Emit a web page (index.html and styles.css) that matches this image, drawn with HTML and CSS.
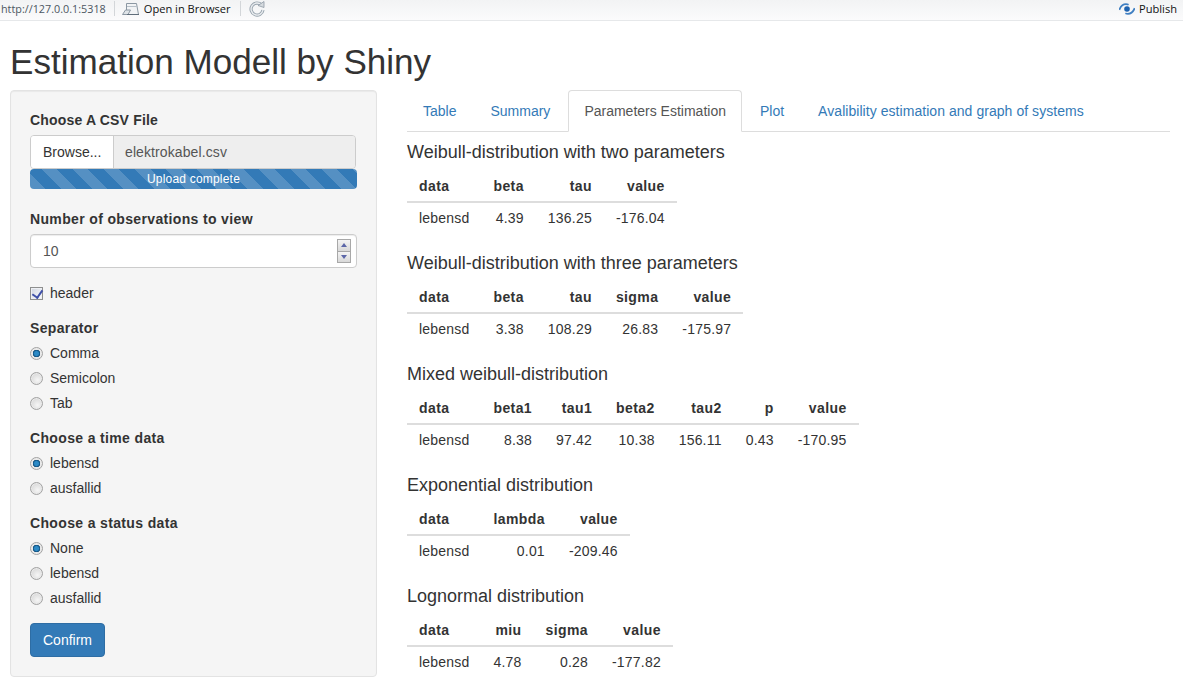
FILE: index.html
```html
<!DOCTYPE html>
<html lang="en">

<head>
    <meta charset="UTF-8">
    <meta name="viewport" content="width=device-width, initial-scale=1.0">
    <title>Estimation Modell by Shiny</title>
    <link rel="stylesheet" href="styles.css">
</head>

<body>
    <div class="toolbar">
        <span class="tb-url">http://127.0.0.1:5318</span>
        <span class="tb-sep"></span>
        <svg class="tb-open" width="18" height="14" viewBox="0 0 18 14">
            <path d="M4.500 1.500h10l2 11h-12z" fill="#f1f3f5" stroke="#8b97a2"/>
            <path d="M5 4.500h10" stroke="#b6bfc7"/>
            <path d="M.5 12.500l3-4.500h5l-2.500 4.500z" fill="#dfe4e8" stroke="#8b97a2"/>
            <path d="M5 12.500h12" stroke="#5f6d7a"/>
        </svg>
        <span class="tb-label">Open in Browser</span>
        <span class="tb-sep tb-sep-b"></span>
        <svg class="tb-reload" width="17" height="17" viewBox="0 0 17 17">
            <path d="M12.500 5A6 6 0 1 0 14 10" fill="none" stroke="#98a4ae" stroke-width="3.200"/>
            <path d="M12.500 5A6 6 0 1 0 14 10" fill="none" stroke="#e9ecef" stroke-width="1.400"/>
            <path d="M9 5.500l6-4v6z" fill="#d5dade" stroke="#8f9ba6" stroke-width=".8"/>
        </svg>
        <span class="tb-publish">
            <svg width="16" height="12" viewBox="0 0 16 12">
                <circle cx="8" cy="6" r="2.800" fill="#1f63b0"/>
                <path d="M.3 6.800C1.800 3 4 1.200 7 1.200c1 0 1.800.2 2.600.6M15.700 5.200C14.200 9 12 10.800 9 10.800c-1 0-1.800-.2-2.600-.6" fill="none" stroke="#3f7fc2" stroke-width="1.800"/>
            </svg>
            <span class="tb-label">Publish</span>
        </span>
    </div>

    <div class="page">
        <h2 class="title">Estimation Modell by Shiny</h2>

        <div class="layout">
            <div class="sidebar">
                <div class="field">
                    <label class="field-label label-tight">Choose A CSV File</label>
                    <div class="file-group">
                        <span class="browse">Browse...</span>
                        <span class="file-name">elektrokabel.csv</span>
                    </div>
                    <div class="progress">Upload complete</div>
                </div>

                <div class="field field-num">
                    <label class="field-label">Number of observations to view</label>
                    <div class="num-input">
                        <span>10</span>
                        <span class="spinner">
                            <span class="spin spin-up"></span>
                            <span class="spin spin-down"></span>
                        </span>
                    </div>
                </div>

                <label class="check"><input type="checkbox" checked>header</label>

                <div class="radio-group">
                    <label class="field-label">Separator</label>
                    <label class="radio"><input type="radio" name="sep" checked>Comma</label>
                    <label class="radio"><input type="radio" name="sep">Semicolon</label>
                    <label class="radio"><input type="radio" name="sep">Tab</label>
                </div>

                <div class="radio-group">
                    <label class="field-label">Choose a time data</label>
                    <label class="radio"><input type="radio" name="time" checked>lebensd</label>
                    <label class="radio"><input type="radio" name="time">ausfallid</label>
                </div>

                <div class="radio-group">
                    <label class="field-label">Choose a status data</label>
                    <label class="radio"><input type="radio" name="status" checked>None</label>
                    <label class="radio"><input type="radio" name="status">lebensd</label>
                    <label class="radio"><input type="radio" name="status">ausfallid</label>
                </div>

                <button class="confirm">Confirm</button>
            </div>

            <div class="main">
                <ul class="tabs">
                    <li><a href="#">Table</a></li>
                    <li><a href="#">Summary</a></li>
                    <li class="active"><a href="#">Parameters Estimation</a></li>
                    <li><a href="#">Plot</a></li>
                    <li><a href="#">Avalibility estimation and graph of systems</a></li>
                </ul>

                <h4>Weibull-distribution with two parameters</h4>
                <table>
                    <tr><th class="left">data</th><th>beta</th><th>tau</th><th>value</th></tr>
                    <tr><td class="left">lebensd</td><td>4.39</td><td>136.25</td><td>-176.04</td></tr>
                </table>

                <h4>Weibull-distribution with three parameters</h4>
                <table>
                    <tr><th class="left">data</th><th>beta</th><th>tau</th><th>sigma</th><th>value</th></tr>
                    <tr><td class="left">lebensd</td><td>3.38</td><td>108.29</td><td>26.83</td><td>-175.97</td></tr>
                </table>

                <h4>Mixed weibull-distribution</h4>
                <table>
                    <tr><th class="left">data</th><th>beta1</th><th>tau1</th><th>beta2</th><th>tau2</th><th>p</th><th>value</th></tr>
                    <tr><td class="left">lebensd</td><td>8.38</td><td>97.42</td><td>10.38</td><td>156.11</td><td>0.43</td><td>-170.95</td></tr>
                </table>

                <h4>Exponential distribution</h4>
                <table>
                    <tr><th class="left">data</th><th>lambda</th><th>value</th></tr>
                    <tr><td class="left">lebensd</td><td>0.01</td><td>-209.46</td></tr>
                </table>

                <h4>Lognormal distribution</h4>
                <table>
                    <tr><th class="left">data</th><th>miu</th><th>sigma</th><th>value</th></tr>
                    <tr><td class="left">lebensd</td><td>4.78</td><td>0.28</td><td>-177.82</td></tr>
                </table>
            </div>
        </div>
    </div>
</body>

</html>
```

FILE: styles.css
```css
* {
    box-sizing: border-box;
}

html,
body {
    height: 696px;
    overflow: hidden;
}

body {
    margin: 0;
    background-color: #fff;
    color: #333;
    font-family: "Liberation Sans", Arial, sans-serif;
    font-size: 14px;
    line-height: 20px;
}

/* toolbar */
.toolbar {
    display: flex;
    align-items: center;
    height: 21px;
    padding-bottom: 3px;
    background: linear-gradient(#f2f3f4, #fbfbfc);
    border-bottom: 1px solid #e6e8ea;
    font-family: "Open Sans", "Liberation Sans", sans-serif;
}

.tb-url {
    color: #4c5661;
    font-size: 10.8px;
    margin-left: 1px;
}

.tb-sep {
    width: 1px;
    height: 15px;
    margin-left: 8px;
    background-color: #d3d6d9;
}

.tb-sep-b {
    margin-left: 9px;
}

.tb-open {
    margin-left: 7px;
}

.tb-label {
    color: #111;
    margin-left: 4px;
    font-size: 11.1px;
}

.tb-reload {
    margin-left: 8px;
}

.tb-publish {
    display: flex;
    align-items: center;
    margin-left: auto;
    margin-right: 6px;
}

/* page */
.page {
    padding: 0 13px 0 10px;
}

.title {
    margin: 21px 0 8px 0;
    height: 40px;
    font-size: 35.1px;
    font-weight: 500;
    line-height: 40px;
}

.layout {
    display: flex;
    align-items: flex-start;
}

.sidebar {
    width: 367px;
    height: 587px;
    padding: 19px;
    margin-right: 30px;
    background-color: #f5f5f5;
    border: 1px solid #e3e3e3;
    border-radius: 4px;
    box-shadow: inset 0 1px 1px rgba(0, 0, 0, .05);
    flex-shrink: 0;
}

.field-label {
    display: block;
    margin-bottom: 5px;
    font-weight: bold;
    letter-spacing: .35px;
}

.label-tight {
    letter-spacing: .18px;
}

.field {
    margin-bottom: 20px;
}

.field-num {
    margin-bottom: 15px;
}

.file-group {
    display: flex;
    height: 34px;
    width: 326px;
    border: 1px solid #ccc;
    border-radius: 4px;
    overflow: hidden;
}

.browse {
    width: 83px;
    padding: 6px 12px;
    background-color: #fff;
    border-right: 1px solid #ccc;
}

.file-name {
    flex: 1;
    padding: 6px 11px;
    background-color: #eee;
    color: #555;
    letter-spacing: .1px;
}

.progress {
    height: 20px;
    background-color: #337ab7;
    background-image: repeating-linear-gradient(45deg, rgba(255, 255, 255, .17) 0 11px, transparent 11px 22px);
    border-radius: 4px;
    color: #fff;
    font-size: 12px;
    letter-spacing: .2px;
    text-align: center;
}

.num-input {
    display: flex;
    align-items: center;
    justify-content: space-between;
    height: 34px;
    padding: 0 5px 0 12px;
    background-color: #fff;
    border: 1px solid #ccc;
    border-radius: 4px;
    box-shadow: inset 0 1px 1px rgba(0, 0, 0, .075);
    color: #555;
}

.spinner {
    display: flex;
    flex-direction: column;
    width: 14px;
    height: 24px;
    border: 1px solid #a8a8a8;
    background-color: #fff;
}

.spin {
    flex: 1;
    position: relative;
    background: linear-gradient(#f4f4f4, #d8d8d8);
}

.spin-up {
    border-bottom: 1px solid #a8a8a8;
}

.spin::after {
    content: "";
    position: absolute;
    left: 3px;
    top: 3px;
    border-left: 3px solid transparent;
    border-right: 3px solid transparent;
}

.spin-up::after {
    border-bottom: 4px solid #5c66a8;
}

.spin-down::after {
    border-top: 4px solid #5c66a8;
}

.check,
.radio {
    display: flex;
    align-items: center;
    height: 20px;
}

.check {
    margin-bottom: 15px;
}

.check input,
.radio input {
    appearance: none;
    width: 13px;
    height: 13px;
    margin: 0 7px 0 0;
}

.check input {
    position: relative;
    border: 1px solid #8e8f8f;
    background: linear-gradient(135deg, #cfd4de, #fff);
    box-shadow: inset 0 0 0 1px #eef0f4;
}

.check input::after {
    content: "";
    position: absolute;
    left: 3px;
    top: 0;
    width: 5px;
    height: 8px;
    border: solid #3f50a8;
    border-width: 0 2px 2px 0;
    transform: rotate(35deg);
}

.radio input {
    border: 1px solid #a2a2a2;
    border-radius: 50%;
    background: radial-gradient(circle at 60% 65%, #f6f6f6, #cfcfcf);
    box-shadow: inset 0 0 0 1px #eaeaea;
}

.radio input:checked {
    background: radial-gradient(circle, #2c8ac6 0 2px, #0c4a78 3.500px, #e8e8e8 4px);
}

.radio {
    margin-top: 5px;
}

.radio-group {
    margin-bottom: 15px;
}

.confirm {
    display: block;
    width: 75px;
    height: 34px;
    padding: 0;
    background-color: #337ab7;
    border: 1px solid #2e6da4;
    border-radius: 4px;
    color: #fff;
    font-family: inherit;
    font-size: 14px;
}

/* main column */
.main {
    flex: 1;
    min-width: 0;
}

.tabs {
    display: flex;
    height: 42px;
    margin: 0;
    padding: 0;
    list-style: none;
    border-bottom: 1px solid #ddd;
}

.tabs a {
    display: block;
    height: 42px;
    padding: 10px 15px;
    margin-right: 2px;
    border: 1px solid transparent;
    border-radius: 4px 4px 0 0;
    color: #337ab7;
    text-decoration: none;
}

.tabs li:last-child a {
    letter-spacing: .05px;
}

.tabs .active a {
    background-color: #fff;
    border-color: #ddd #ddd #fff;
    color: #555;
}

h4 {
    margin: 10px 0 9px;
    font-size: 18px;
    font-weight: 500;
    line-height: 20px;
}

table {
    margin-bottom: 20px;
    border-collapse: collapse;
    border-spacing: 0;
}

th,
td {
    padding: 5px 12px;
    text-align: right;
    line-height: 20px;
    letter-spacing: .2px;
}

th {
    border-bottom: 2px solid #ddd;
    letter-spacing: .4px;
}

.left {
    text-align: left;
}
```
